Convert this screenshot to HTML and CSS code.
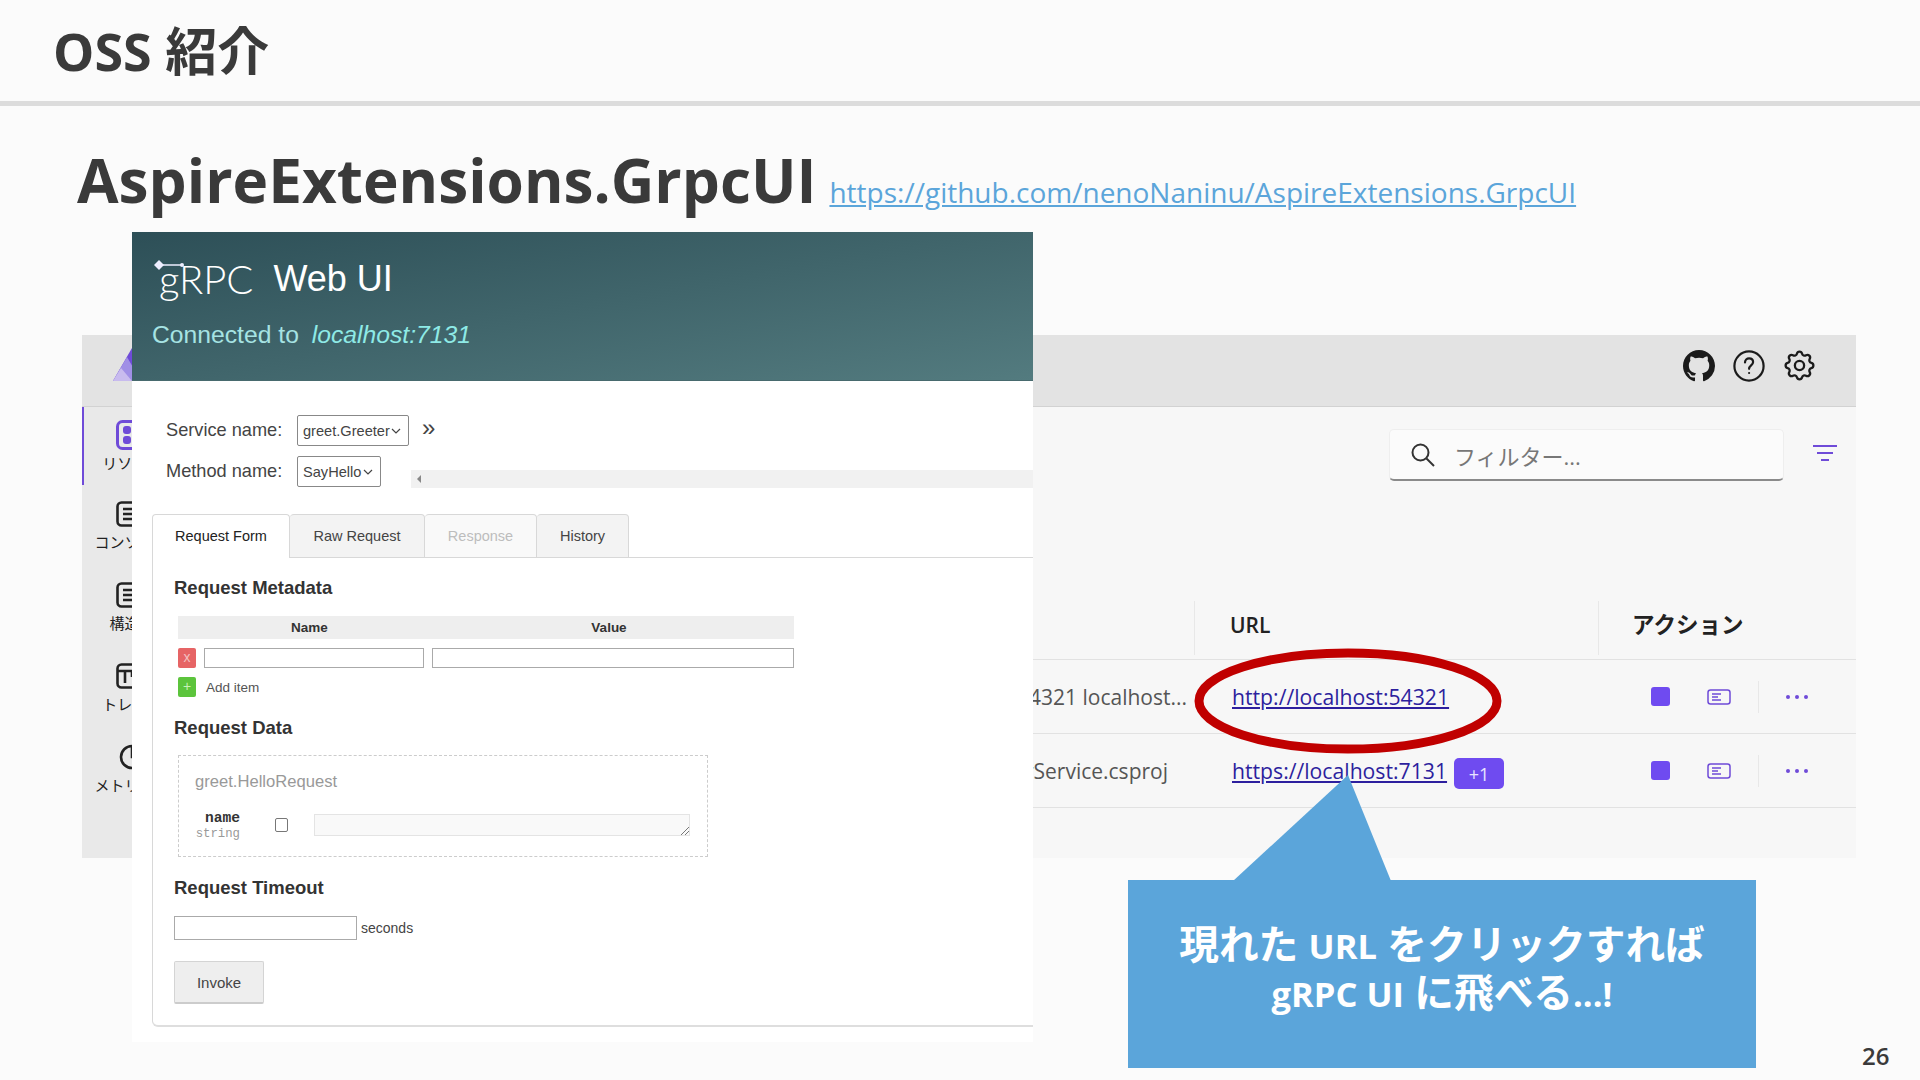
FILE: index.html
```html
<!DOCTYPE html>
<html lang="ja">
<head>
    <meta charset="UTF-8">
    <title>OSS 紹介</title>
    <link rel="stylesheet" href="styles.css">
</head>
<body>
<div class="slide">
    <header class="slide-head"><h1>OSS 紹介</h1></header>

    <div class="subject">
        <h2>AspireExtensions.GrpcUI</h2>
        <a href="#">https://github.com/nenoNaninu/AspireExtensions.GrpcUI</a>
    </div>

    <!-- dashboard screenshot -->
    <div class="dash">
        <div class="dash-top">
            <svg class="dash-logo" viewBox="0 0 46 40"><path d="M23 0 46 40H0z" fill="#6f4bd8"/><path d="M4 33 14 16l14 24H0z" fill="#a08fe6"/><path d="M0 40l8-13 11 13z" fill="#c8bbee"/></svg>
            <div class="top-icons">
                <svg width="32" height="32" viewBox="0 0 16 16"><path fill="#1b1b1b" d="M8 0C3.58 0 0 3.58 0 8c0 3.54 2.29 6.53 5.47 7.59.4.07.55-.17.55-.38 0-.19-.01-.82-.01-1.49-2.01.37-2.53-.49-2.69-.94-.09-.23-.48-.94-.82-1.13-.28-.15-.68-.52-.01-.53.63-.01 1.08.58 1.23.82.72 1.21 1.87.87 2.33.66.07-.52.28-.87.51-1.07-1.78-.2-3.64-.89-3.64-3.95 0-.87.31-1.59.82-2.15-.08-.2-.36-1.02.08-2.12 0 0 .67-.21 2.2.82.64-.18 1.32-.27 2-.27.68 0 1.36.09 2 .27 1.53-1.04 2.2-.82 2.2-.82.44 1.1.16 1.92.08 2.12.51.56.82 1.27.82 2.15 0 3.07-1.87 3.75-3.65 3.95.29.25.54.73.54 1.48 0 1.07-.01 1.93-.01 2.2 0 .21.15.46.55.38A8.013 8.013 0 0016 8c0-4.42-3.58-8-8-8z"/></svg>
                <svg width="32" height="32" viewBox="0 0 32 32" fill="none" stroke="#1b1b1b" stroke-width="2.2"><circle cx="16" cy="16" r="14.6"/><path d="M12 12.4c0-2.4 1.8-4 4.1-4 2.3 0 4 1.500 4 3.600 0 3.300-4 3.400-4 6.800" stroke-linecap="round"/><circle cx="16.100" cy="23" r="1.100" fill="#1b1b1b" stroke="none"/></svg>
                <svg width="37" height="37" viewBox="0 0 24 24" fill="none" stroke="#1b1b1b" stroke-width="1.500"><path d="M10.325 4.317c.426-1.756 2.924-1.756 3.35 0a1.724 1.724 0 0 0 2.573 1.066c1.543-.94 3.31.826 2.37 2.37a1.724 1.724 0 0 0 1.065 2.572c1.756.426 1.756 2.924 0 3.35a1.724 1.724 0 0 0-1.066 2.573c.94 1.543-.826 3.31-2.37 2.37a1.724 1.724 0 0 0-2.572 1.065c-.426 1.756-2.924 1.756-3.35 0a1.724 1.724 0 0 0-2.573-1.066c-1.543.94-3.31-.826-2.37-2.37a1.724 1.724 0 0 0-1.065-2.572c-1.756-.426-1.756-2.924 0-3.35a1.724 1.724 0 0 0 1.066-2.573c-.94-1.543.826-3.31 2.37-2.37c1 .608 2.296.07 2.572-1.065z"/><circle cx="12" cy="12" r="3"/></svg>
            </div>
        </div>
        <div class="dash-body">
            <nav class="dash-side">
                <div class="side-item active">
                    <svg width="32" height="30" viewBox="0 0 32 30"><rect x="1.500" y="1.500" width="29" height="27" rx="5" fill="none" stroke="#6f4bd8" stroke-width="3"/><rect x="7" y="6" width="8" height="8" rx="3" fill="#6f4bd8"/><rect x="7" y="16" width="8" height="8" rx="3" fill="#6f4bd8"/><rect x="17" y="6" width="8" height="8" rx="3" fill="#6f4bd8"/><rect x="17" y="16" width="8" height="8" rx="3" fill="#6f4bd8"/></svg>
                    <span>リソース</span>
                </div>
                <div class="side-item">
                    <svg width="32" height="26" viewBox="0 0 32 26" fill="none" stroke="#222" stroke-width="2.600"><rect x="1.500" y="1.500" width="29" height="23" rx="4"/><path d="M7 8h18M7 13h18M7 18h18"/></svg>
                    <span>コンソール</span>
                </div>
                <div class="side-item">
                    <svg width="32" height="26" viewBox="0 0 32 26" fill="none" stroke="#222" stroke-width="2.600"><rect x="1.500" y="1.500" width="29" height="23" rx="4"/><path d="M7 8h18M7 13h18M7 18h18"/></svg>
                    <span>構造化</span>
                </div>
                <div class="side-item">
                    <svg width="32" height="26" viewBox="0 0 32 26" fill="none" stroke="#222" stroke-width="2.600"><rect x="1.500" y="1.500" width="29" height="23" rx="4"/><path d="M1.500 8h29M9 8v12M16 8v6M23 8v9"/></svg>
                    <span>トレース</span>
                </div>
                <div class="side-item">
                    <svg width="32" height="26" viewBox="0 0 32 26" fill="none" stroke="#222" stroke-width="2.600"><circle cx="16" cy="13" r="11"/><path d="M16 2v11h11"/></svg>
                    <span>メトリック</span>
                </div>
            </nav>
            <div class="dash-main">
                <div class="filter-row">
                    <div class="filter-box">
                        <svg width="26" height="26" viewBox="0 0 26 26" fill="none" stroke="#333" stroke-width="2"><circle cx="10.500" cy="10.500" r="8"/><path d="M16.500 16.500 24 24"/></svg>
                        <span>フィルター...</span>
                    </div>
                    <svg class="filter-icon" width="24" height="17" viewBox="0 0 24 17" stroke="#6f4bd8" stroke-width="2"><path d="M0 2h24M4 9h16M8 16h8"/></svg>
                </div>
                <div class="res-head">
                    <div></div>
                    <div class="res-th">URL</div>
                    <div class="res-th act-th">アクション</div>
                </div>
                <div class="res-row">
                    <div class="res-src"><span>http://localhost:54321 localhost...</span></div>
                    <div class="res-url"><a href="#">http://localhost:54321</a></div>
                    <div class="res-act">
                        <i class="stop"></i>
                        <svg width="24" height="16" viewBox="0 0 24 16" fill="none" stroke="#6f4bd8" stroke-width="1.500"><rect x="1" y="1" width="22" height="14" rx="2.500"/><path d="M5 5h9M5 8h6M5 11h9"/></svg>
                        <b class="act-sep"></b>
                        <svg width="22" height="4" viewBox="0 0 22 4" fill="#6f4bd8"><circle cx="2" cy="2" r="2"/><circle cx="11" cy="2" r="2"/><circle cx="20" cy="2" r="2"/></svg>
                    </div>
                </div>
                <div class="res-row">
                    <div class="res-src short"><span>GreeterService.csproj</span></div>
                    <div class="res-url"><a href="#">https://localhost:7131</a><span class="plus">+1</span></div>
                    <div class="res-act">
                        <i class="stop"></i>
                        <svg width="24" height="16" viewBox="0 0 24 16" fill="none" stroke="#6f4bd8" stroke-width="1.500"><rect x="1" y="1" width="22" height="14" rx="2.500"/><path d="M5 5h9M5 8h6M5 11h9"/></svg>
                        <b class="act-sep"></b>
                        <svg width="22" height="4" viewBox="0 0 22 4" fill="#6f4bd8"><circle cx="2" cy="2" r="2"/><circle cx="11" cy="2" r="2"/><circle cx="20" cy="2" r="2"/></svg>
                    </div>
                </div>
            </div>
        </div>
    </div>

    <!-- grpc ui screenshot, lies over the dashboard -->
    <div class="grpc">
        <div class="grpc-head">
            <div class="grpc-title">
                <svg class="grpc-arrow" width="32" height="14" viewBox="0 0 32 14"><path d="M1 6 6 1l5 5-5 5z" fill="#eef"/><path d="M9 6h20" stroke="#eef" stroke-width="1.500"/><circle cx="29" cy="6" r="2" fill="#eef"/></svg>
                <span class="grpc-name">gRPC</span><span>Web UI</span>
            </div>
            <div class="grpc-conn">Connected to <em>localhost:7131</em></div>
        </div>
        <div class="grpc-body">
            <div class="pick-row">
                <label>Service name:</label>
                <div class="pick w-service">greet.Greeter<svg width="10" height="6" viewBox="0 0 10 6" fill="none" stroke="#444" stroke-width="1.200"><path d="M1 1l4 4 4-4"/></svg></div>
                <span class="more">»</span>
            </div>
            <div class="pick-row">
                <label>Method name:</label>
                <div class="pick w-method">SayHello<svg width="10" height="6" viewBox="0 0 10 6" fill="none" stroke="#444" stroke-width="1.200"><path d="M1 1l4 4 4-4"/></svg></div>
                <div class="scroll-track"><i></i></div>
            </div>

            <div class="tabs">
                <div class="tab on">Request Form</div>
                <div class="tab t2">Raw Request</div>
                <div class="tab t3 off">Response</div>
                <div class="tab t4">History</div>
                <div class="tab-rest"></div>
            </div>
            <div class="tab-panel">
                <h3>Request Metadata</h3>
                <div class="meta-head"><span>Name</span><span>Value</span></div>
                <div class="meta-row">
                    <b class="sq red">x</b>
                    <div class="txt name-in"></div>
                    <div class="txt value-in"></div>
                </div>
                <div class="meta-row add">
                    <b class="sq green">+</b>
                    <span>Add item</span>
                </div>
                <h3 class="h-data">Request Data</h3>
                <div class="data-box">
                    <div class="data-type">greet.HelloRequest</div>
                    <div class="data-field">
                        <div class="field-name"><b>name</b><span>string</span></div>
                        <i class="check"></i>
                        <div class="area"><svg width="9" height="9" viewBox="0 0 9 9" stroke="#777"><path d="M1 9 9 1M5 9l4-4"/></svg></div>
                    </div>
                </div>
                <h3 class="h-time">Request Timeout</h3>
                <div class="time-row"><div class="txt time-in"></div><span>seconds</span></div>
                <div class="invoke">Invoke</div>
            </div>
        </div>
    </div>

    <svg class="mark" width="320" height="116" viewBox="0 0 320 116"><ellipse cx="158" cy="57" rx="149" ry="48" fill="none" stroke="#c00000" stroke-width="9"/></svg>

    <div class="callout">
        <svg class="callout-tail" width="158" height="106" viewBox="0 0 158 106"><path d="M0 106 115 0l43 106z" fill="#5ba5da"/></svg>
        <p>現れた <span class="lat">URL</span> をクリックすれば<br><span class="lat">gRPC UI</span> に飛べる<span class="lat">...!</span></p>
    </div>

    <div class="page-no">26</div>
</div>
</body>
</html>
```

FILE: styles.css
```css
* {
    box-sizing: border-box;
}
html, body {
    margin: 0;
    padding: 0;
}
body {
    width: 1920px;
    height: 1080px;
    overflow: hidden;
    font-family: "Open Sans", "Noto Sans CJK JP", sans-serif;
    background-color: #fbfbfb;
}
.slide {
    position: relative;
    width: 1920px;
    height: 1080px;
    overflow: hidden;
}

/* slide title */
.slide-head {
    height: 106px;
    padding: 21px 0 0 53px;
    border-bottom: 5px solid #dcdcdc;
}
.slide-head h1 {
    margin: 0;
    font-size: 52px;
    line-height: 60px;
    font-weight: 700;
    color: #3a3a3a;
}
.subject {
    display: flex;
    align-items: baseline;
    gap: 13px;
    height: 229px;
    padding: 39px 0 0 77px;
}
.subject h2 {
    margin: 0;
    font-size: 60.300px;
    line-height: 70px;
    font-weight: 700;
    color: #3a3a3a;
}
.subject a {
    font-size: 28px;
    color: #5ba5da;
}

/* dashboard */
.dash {
    width: 1774px;
    height: 523px;
    margin-left: 82px;
    background-color: #f7f7f7;
}
.dash-top {
    display: flex;
    align-items: center;
    justify-content: space-between;
    height: 72px;
    padding: 0 38px 0 31px;
    background-color: #e3e3e3;
    border-bottom: 1px solid #d2d2d2;
}
.dash-logo {
    width: 46px;
    height: 40px;
    align-self: flex-start;
    margin-top: 6px;
}
.top-icons {
    display: flex;
    align-items: center;
    gap: 18px;
    margin-bottom: 10px;
}
.top-icons svg:last-child {
    margin-left: -2px;
}
.dash-body {
    display: flex;
    height: 451px;
}
.dash-side {
    width: 100px;
    background-color: #e9e9e9;
}
.side-item {
    display: flex;
    flex-direction: column;
    align-items: center;
    height: 81px;
    padding-top: 13px;
    font-size: 15px;
    color: #222;
}
.side-item span {
    margin-top: 4px;
    white-space: nowrap;
}
.side-item.active {
    height: 78px;
    margin-bottom: 3px;
    box-shadow: inset 2px 0 0 #6f4bd8;
}
.side-item.active span {
    margin-top: 2px;
}
.dash-main {
    flex: 1;
    padding-top: 22px;
}
.filter-row {
    display: flex;
    align-items: center;
    gap: 29px;
    height: 52px;
    padding-left: 1207px;
}
.filter-box {
    display: flex;
    align-items: center;
    gap: 18px;
    width: 395px;
    height: 52px;
    padding-left: 20px;
    background-color: #fbfbfb;
    border: 1px solid #eee;
    border-bottom: 2px solid #8a8a8a;
    border-radius: 5px;
    font-size: 22px;
    color: #777;
}
.filter-icon {
    margin-top: -6px;
}
.res-head, .res-row {
    display: grid;
    grid-template-columns: 1012px 404px 258px;
    border-bottom: 1px solid #e2e2e2;
}
.res-head {
    height: 64px;
    margin-top: 115px;
    align-items: center;
}
.res-th {
    height: 54px;
    line-height: 48px;
    padding-left: 35px;
    border-left: 1px solid #e8e8e8;
    font-size: 21px;
    font-weight: 600;
    color: #222;
}
.act-th {
    padding-left: 33px;
    font-size: 22.500px;
}
.res-row {
    height: 74px;
    align-items: center;
}
.res-src {
    text-align: right;
    padding-right: 7px;
    font-size: 21px;
    color: #555;
    white-space: nowrap;
}
.res-src.short {
    padding-right: 26px;
}
.res-url {
    display: flex;
    align-items: center;
    gap: 7px;
    padding-left: 38px;
    font-size: 21.200px;
}
.res-url a {
    color: #2d1f9e;
}
.plus {
    width: 50px;
    height: 31px;
    line-height: 33px;
    margin-top: 5px;
    text-align: center;
    border-radius: 5px;
    background-color: #6f4bf0;
    color: #e8e4ff;
    font-size: 18px;
}
.res-act {
    display: flex;
    align-items: center;
    padding-left: 53px;
}
.stop {
    width: 19px;
    height: 19px;
    margin-right: 37px;
    border-radius: 3px;
    background-color: #6f4bf0;
}
.act-sep {
    width: 1px;
    height: 32px;
    margin: 0 27px;
    background-color: #e8e8e8;
}

/* grpc ui window */
.grpc {
    position: absolute;
    left: 132px;
    top: 232px;
    width: 901px;
    height: 810px;
    background-color: #fff;
    font-family: "Liberation Sans", Arial, sans-serif;
    overflow: hidden;
}
.grpc-head {
    position: relative;
    height: 149px;
    padding: 25px 0 0 20px;
    background: linear-gradient(170deg, #2d4f57, #537b7f);
    border-bottom: 1px solid #486a6e;
}
.grpc-title {
    display: flex;
    gap: 20px;
    height: 44px;
    line-height: 44px;
    padding-left: 7px;
    font-size: 36px;
    color: #fff;
}
.grpc-name {
    font-family: "Lato", sans-serif;
    font-weight: 300;
    font-size: 40px;
}
.grpc-arrow {
    position: absolute;
    left: 21px;
    top: 27px;
}
.grpc-conn {
    margin-top: 20px;
    font-size: 24.700px;
    color: #a6e3e3;
}
.grpc-conn em {
    margin-left: 6px;
    color: #8eeae6;
}
.grpc-body {
    padding: 34px 0 0 20px;
    color: #444;
}
.pick-row {
    display: flex;
    align-items: center;
    height: 31px;
    margin-bottom: 10px;
    padding-left: 14px;
    font-size: 18.200px;
}
.pick-row label {
    width: 131px;
}
.pick {
    display: flex;
    align-items: center;
    justify-content: space-between;
    height: 31px;
    padding: 0 7px 0 5px;
    border: 1px solid #888;
    border-radius: 2px;
    font-size: 14.600px;
}
.w-service {
    width: 112px;
}
.w-method {
    width: 84px;
}
.more {
    margin: -6px 0 0 13px;
    font-size: 24px;
}
.scroll-track {
    flex: 1;
    height: 18px;
    margin: 15px 0 0 30px;
    padding: 5px 0 0 6px;
    background-color: #f1f1f1;
}
.scroll-track i {
    display: block;
    width: 0;
    height: 0;
    border: 4px solid transparent;
    border-right-color: #888;
    border-left: 0;
}
.tabs {
    display: flex;
    align-items: stretch;
    height: 44px;
    margin-top: 27px;
}
.tab {
    height: 44px;
    line-height: 42px;
    text-align: center;
    font-size: 14.500px;
    background-color: #f3f3f3;
    border: 1px solid #d8d8d8;
    border-left: 0;
    border-radius: 4px 4px 0 0;
}
.tab.on {
    width: 138px;
    background-color: #fff;
    border-left: 1px solid #d8d8d8;
    border-bottom: 0;
    color: #222;
}
.t2 {
    width: 135px;
}
.t3 {
    width: 112px;
}
.t4 {
    width: 92px;
}
.tab.off {
    background-color: #f9f9f9;
    color: #bdbdbd;
}
.tab-rest {
    flex: 1;
    border-bottom: 1px solid #d8d8d8;
}
.tab-panel {
    height: 469px;
    padding: 18px 0 0 21px;
    border-left: 1px solid #d8d8d8;
    border-bottom: 2px solid #dedede;
    border-bottom-left-radius: 6px;
}
.tab-panel h3 {
    margin: 0;
    font-size: 18.500px;
    line-height: 24px;
    color: #333;
}
.meta-head {
    display: grid;
    grid-template-columns: 263px 336px;
    width: 616px;
    height: 23px;
    margin: 16px 0 0 4px;
    line-height: 23px;
    text-align: center;
    font-size: 13.500px;
    font-weight: 700;
    background-color: #eee;
    color: #333;
}
.meta-row {
    display: flex;
    align-items: center;
    gap: 8px;
    height: 20px;
    margin: 9px 0 0 4px;
}
.meta-row.add {
    gap: 10px;
    margin-top: 9px;
    font-size: 13.500px;
    color: #555;
}
.sq {
    width: 18px;
    height: 20px;
    line-height: 19px;
    text-align: center;
    border-radius: 2px;
    font-size: 14px;
    font-weight: 400;
    color: #f3c0c0;
}
.red {
    background-color: #e66465;
}
.green {
    background-color: #5cc43c;
    color: #c9f0b9;
}
.txt {
    height: 20px;
    border: 1px solid #aaa;
    background-color: #fff;
}
.name-in {
    width: 220px;
}
.value-in {
    width: 362px;
}
.tab-panel h3.h-data {
    margin-top: 19px;
}
.data-box {
    width: 530px;
    height: 102px;
    margin: 15px 0 0 4px;
    padding: 16px 0 0 16px;
    border: 1px dashed #ccc;
}
.data-type {
    font-size: 16.600px;
    color: #999;
}
.data-field {
    display: flex;
    align-items: center;
    gap: 35px;
    margin-top: 16px;
}
.field-name {
    display: flex;
    flex-direction: column;
    align-items: flex-end;
    width: 45px;
    margin-top: 2px;
    font-family: "Liberation Mono", monospace;
    line-height: 16px;
}
.field-name b {
    font-size: 14.600px;
    color: #333;
}
.field-name span {
    font-size: 12.300px;
    color: #999;
}
.check {
    width: 13px;
    height: 14px;
    border: 1px solid #777;
    border-radius: 2px;
    background-color: #fff;
}
.area {
    display: flex;
    align-items: flex-end;
    justify-content: flex-end;
    width: 376px;
    height: 22px;
    margin-left: -9px;
    border: 1px solid #e4e4e4;
    background-color: #f9f9f9;
}
.tab-panel h3.h-time {
    margin-top: 19px;
}
.time-row {
    display: flex;
    align-items: center;
    gap: 4px;
    margin-top: 16px;
    font-size: 14px;
}
.time-in {
    width: 183px;
    height: 24px;
    border-width: 1px;
}
.invoke {
    width: 90px;
    height: 43px;
    margin-top: 21px;
    line-height: 42px;
    text-align: center;
    font-size: 15px;
    background-color: #eee;
    border: 1px solid #d4d4d4;
    border-bottom: 2px solid #ccc;
    border-radius: 2px;
}

/* overlays */
.mark {
    position: absolute;
    left: 1190px;
    top: 644px;
}
.callout {
    position: absolute;
    left: 1128px;
    top: 880px;
    width: 628px;
    height: 188px;
    padding-top: 41px;
    background-color: #5ba5da;
}
.callout-tail {
    position: absolute;
    left: 105px;
    top: -105px;
}
.callout p {
    margin: 0;
    text-align: center;
    font-size: 39.700px;
    line-height: 47px;
    font-weight: 700;
    color: #fff;
}
.callout .lat {
    font-size: 34.500px;
}
.page-no {
    position: absolute;
    left: 1862px;
    top: 1039px;
    font-size: 24px;
    font-weight: 600;
    color: #3a3a3a;
}
```
